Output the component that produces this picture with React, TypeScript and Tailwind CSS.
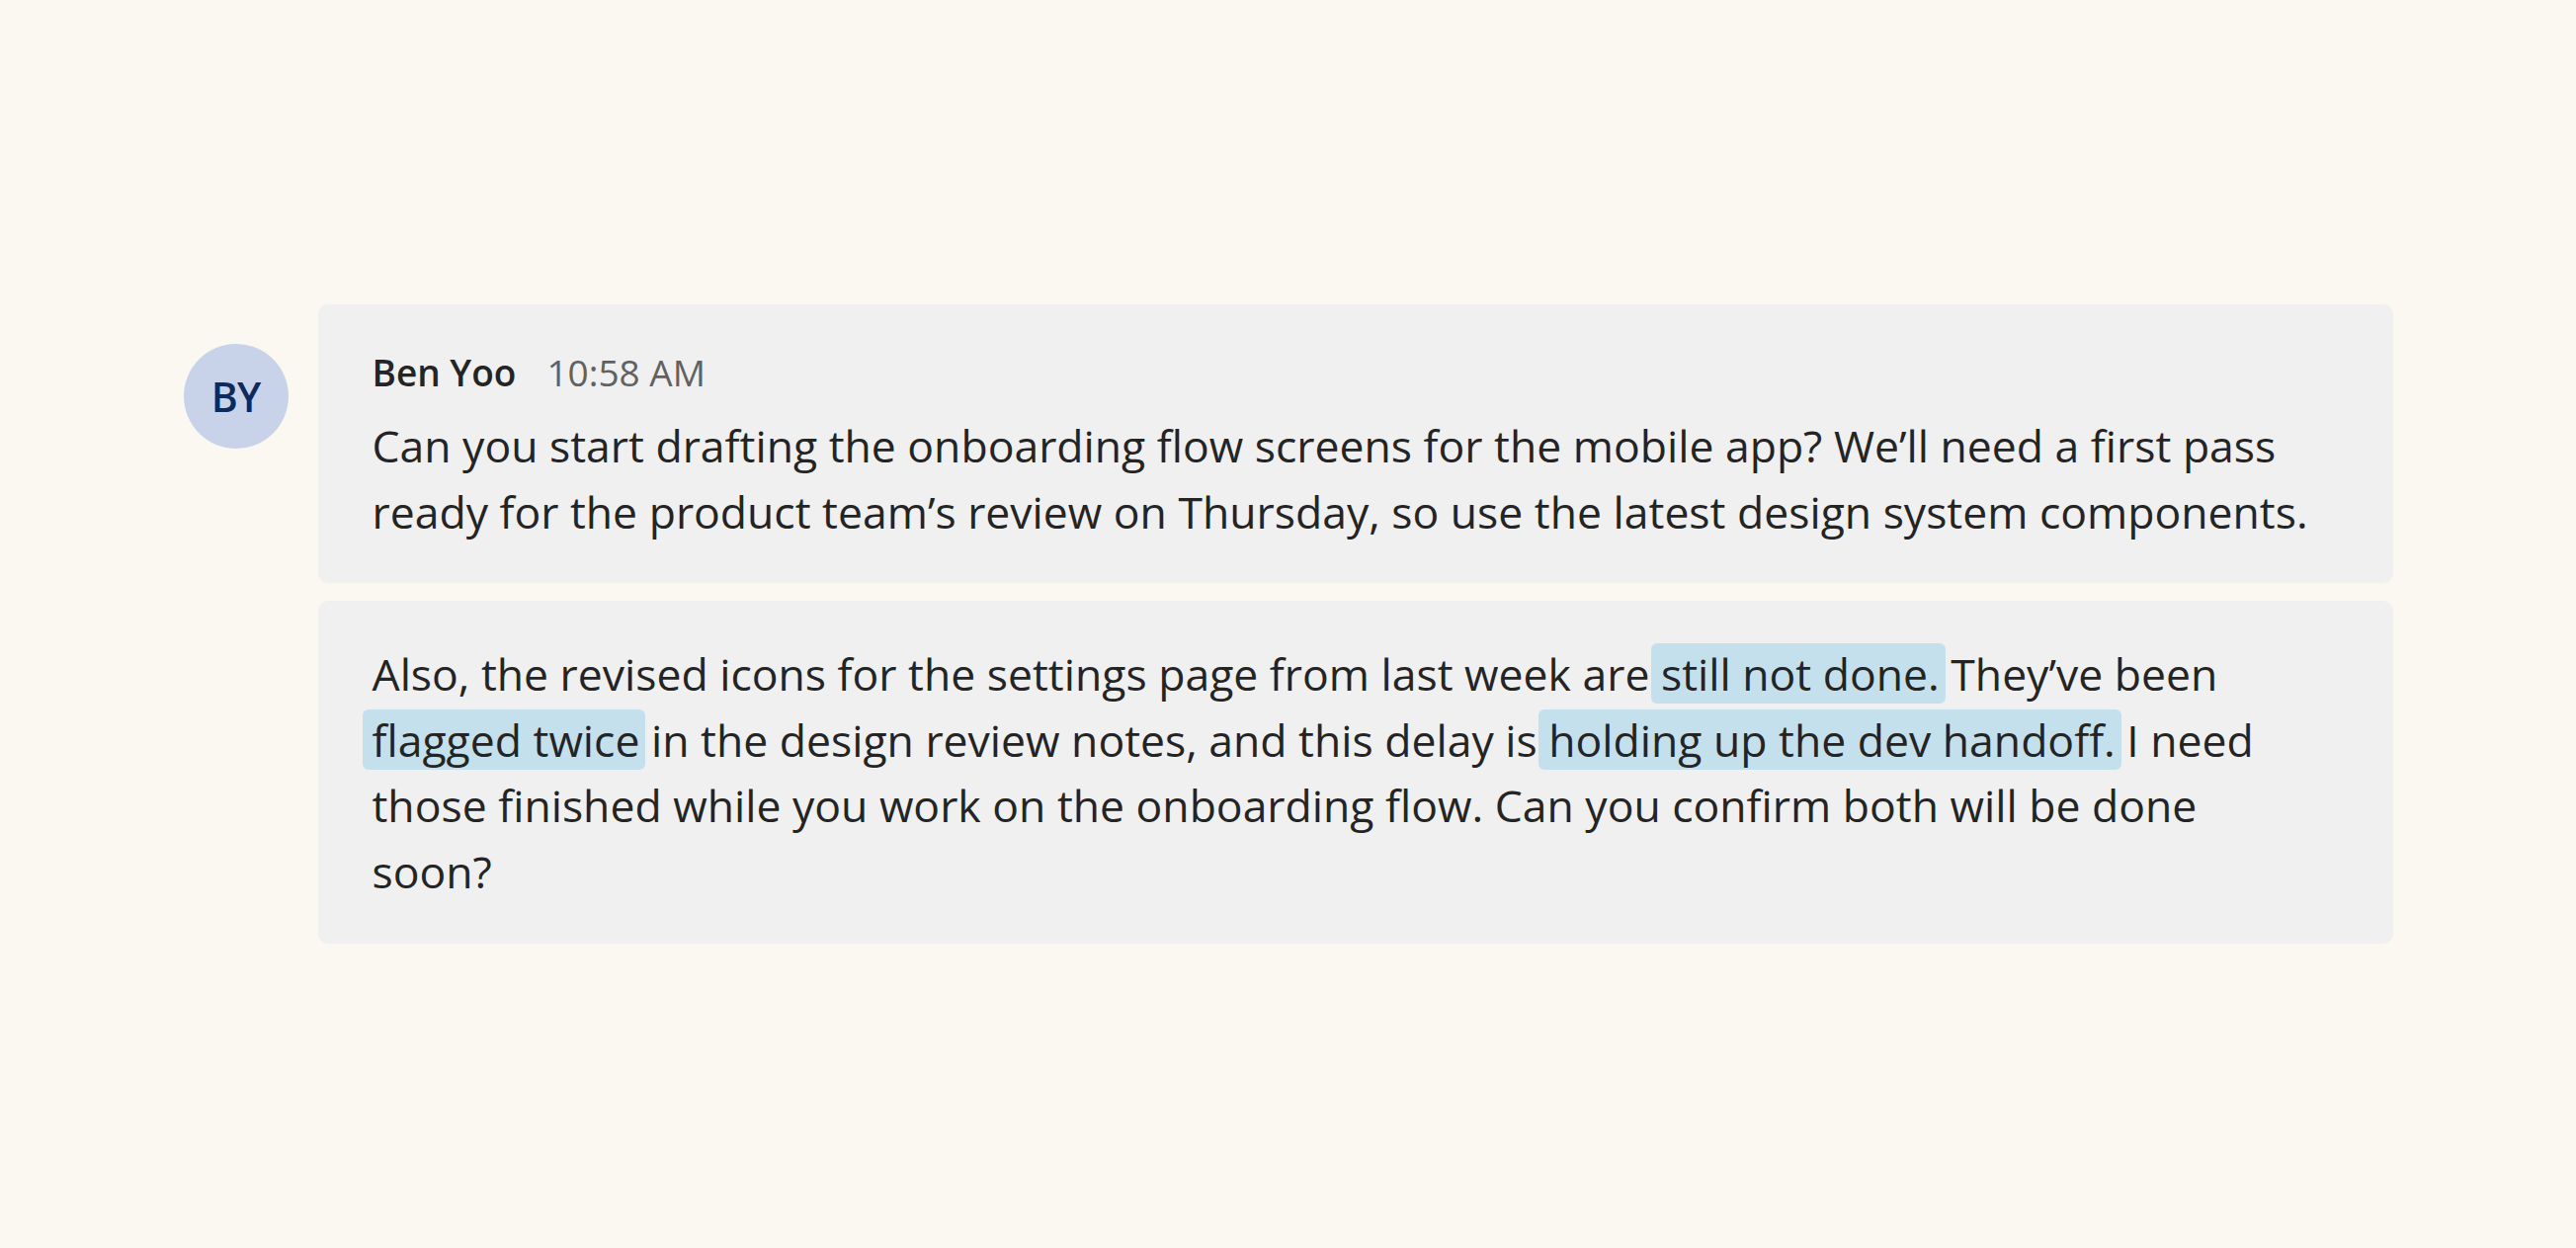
import React from 'react';

const Mark: React.FC<{ children: React.ReactNode }> = ({ children }) => (
  <span className="bg-[#c5e0ed] rounded-md pl-[10px] -ml-[10px] pr-[6px] -mr-[6px]">{children}</span>
);

const App: React.FC = () => {
  return (
    <div className="min-h-screen bg-[#faf8f1] flex items-center justify-center font-['Open_Sans',sans-serif] text-[#242424]">
      <div className="w-[2236px] flex items-start gap-[30px]">
        {/* Avatar */}
        <div className="mt-[40px] w-[106px] h-[106px] shrink-0 rounded-full bg-[#c8d3ea] flex items-center justify-center">
          <span className="text-[41px] font-semibold text-[#0d2a5e] leading-none tracking-[-0.02em]">BY</span>
        </div>

        <div className="flex-1 flex flex-col gap-[18px]">
          {/* First message */}
          <div className="bg-[#f0f0f0] rounded-[10px] pl-[55px] pr-[55px] pt-[44px] pb-[38px]">
            <div className="flex items-baseline h-[50px] leading-[50px] text-[37px] mb-[16px]">
              <span className="font-semibold text-[#242424]">Ben Yoo</span>
              <span className="ml-[31px] text-[#616161]">10:58 AM</span>
            </div>
            <div className="text-[44.5px] leading-[66.7px] whitespace-nowrap">
              <p>Can you start drafting the onboarding flow screens for the mobile app? We’ll need a first pass</p>
              <p>ready for the product team’s review on Thursday, so use the latest design system components.</p>
            </div>
          </div>

          {/* Second message */}
          <div className="bg-[#f0f0f0] rounded-[10px] pl-[55px] pr-[55px] pt-[41px] pb-[39px]">
            <div className="text-[44.5px] leading-[66.7px] whitespace-nowrap">
              <p>
                Also, the revised icons for the settings page from last week are <Mark>still not done.</Mark> They’ve been
              </p>
              <p>
                <Mark>flagged twice</Mark> in the design review notes, and this delay is <Mark>holding up the dev handoff.</Mark> I need
              </p>
              <p>those finished while you work on the onboarding flow. Can you confirm both will be done</p>
              <p>soon?</p>
            </div>
          </div>
        </div>
      </div>
    </div>
  );
};

export default App;
